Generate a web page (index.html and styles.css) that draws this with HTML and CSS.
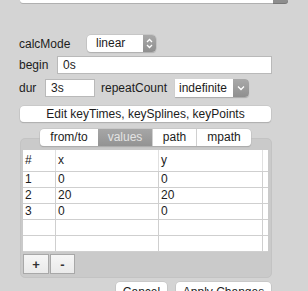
FILE: index.html
```html
<!DOCTYPE html>
<html lang="en">
<head>
  <meta charset="UTF-8" />
  <title>Animate Motion</title>
  <link rel="stylesheet" href="styles.css">
</head>
<body>
  <div class="panel">
    <div class="top-stub">
      <div class="stub-field"></div>
      <div class="stub-arrow"></div>
    </div>

    <div class="row row-calc">
      <span class="label label-calc">calcMode</span>
      <div class="select select-calc">
        <span class="select-text">linear</span>
        <span class="stepper">
          <svg width="7" height="11" viewBox="0 0 7 11"><path d="M1 4 L3.5 1.5 L6 4 M1 7 L3.5 9.5 L6 7" fill="none" stroke="#fff" stroke-width="1.3"/></svg>
        </span>
      </div>
    </div>

    <div class="row row-begin">
      <span class="label label-begin">begin</span>
      <div class="input input-begin">0s</div>
    </div>

    <div class="row row-dur">
      <span class="label label-dur">dur</span>
      <div class="input input-dur">3s</div>
      <span class="label label-repeat">repeatCount</span>
      <div class="popup">
        <span class="popup-text">indefinite</span>
        <span class="popup-arrow">
          <svg width="8" height="6" viewBox="0 0 8 6"><path d="M1 1.5 L4 4.5 L7 1.5" fill="none" stroke="#fff" stroke-width="1.3"/></svg>
        </span>
      </div>
    </div>

    <button class="push edit-button">Edit keyTimes, keySplines, keyPoints</button>

    <div class="tabs">
      <span class="tab tab-fromto">from/to</span>
      <span class="tab tab-values active">values</span>
      <span class="tab tab-path">path</span>
      <span class="tab tab-mpath">mpath</span>
    </div>

    <div class="group">
      <table class="grid">
        <tr class="head">
          <th class="c-num">#</th>
          <th class="c-x">x</th>
          <th class="c-y">y</th>
          <th class="c-end"></th>
        </tr>
        <tr><td>1</td><td>0</td><td>0</td><td></td></tr>
        <tr><td>2</td><td>20</td><td>20</td><td></td></tr>
        <tr><td>3</td><td>0</td><td>0</td><td></td></tr>
        <tr><td></td><td></td><td></td><td></td></tr>
        <tr><td></td><td></td><td></td><td></td></tr>
      </table>
      <div class="grid-buttons">
        <button class="square plus">+</button>
        <button class="square minus">-</button>
      </div>
    </div>

    <div class="actions">
      <button class="push cancel">Cancel</button>
      <button class="push apply">Apply Changes</button>
    </div>
  </div>
</body>
</html>
```

FILE: styles.css
```css
body {
  margin: 0;
  background: #d4d4d4;
  font-family: 'Liberation Sans', Arial, sans-serif;
  font-size: 12px;
  color: #1c1c1c;
  overflow: hidden;
}

.panel {
  padding-left: 20px;
  height: 291px;
}

.top-stub {
  display: flex;
  width: 268px;
  height: 3px;
}

.stub-field {
  flex: 1;
  background: #fff;
  border-bottom-left-radius: 3px;
  box-shadow: 0 1px 0 #b0b0b0;
}

.stub-arrow {
  width: 15px;
  background: #8e8e8e;
  border-bottom-right-radius: 3px;
  box-shadow: 0 1px 0 #777;
}

.row {
  display: flex;
  align-items: center;
  height: 18px;
}

.row-calc {
  margin-top: 32px;
  height: 17px;
}

.row-begin {
  margin-top: 4px;
}

.row-dur {
  margin-top: 5px;
}

.label {
  margin-left: -1px;
}

.label-calc {
  width: 68px;
}

.label-begin {
  width: 38px;
}

.label-dur {
  width: 26px;
}

.label-repeat {
  margin-left: 6px;
  width: 74px;
}

.select {
  display: flex;
  height: 17px;
  width: 69px;
  box-sizing: border-box;
  border-radius: 4px;
  background: #fff;
  box-shadow: 0 0 0 0.5px #b8b8b8, 0 1px 1px rgba(0,0,0,0.2);
  overflow: hidden;
}

.select-text {
  flex: 1;
  padding-left: 9px;
  line-height: 17px;
}

.stepper {
  width: 13px;
  display: flex;
  align-items: center;
  justify-content: center;
  background: linear-gradient(#a9a9a9, #8f8f8f);
}

.input {
  height: 18px;
  box-sizing: border-box;
  background: #fff;
  border: 1px solid #b9b9b9;
  padding-left: 5px;
  line-height: 16px;
}

.input-begin {
  width: 215px;
}

.input-dur {
  width: 50px;
}

.popup {
  display: flex;
  width: 74px;
  height: 18px;
  background: #fff;
  border-radius: 0 4px 4px 0;
  box-shadow: 0 1px 1px rgba(0,0,0,0.2);
  overflow: hidden;
}

.popup-text {
  flex: 1;
  padding-left: 4px;
  line-height: 18px;
}

.popup-arrow {
  width: 16px;
  display: flex;
  align-items: center;
  justify-content: center;
  background: linear-gradient(#a9a9a9, #8f8f8f);
}

.push {
  font-family: inherit;
  font-size: 12px;
  color: #1c1c1c;
  background: #fff;
  border: none;
  border-radius: 4px;
  box-shadow: 0 0 0 0.5px #bdbdbd, 0 1px 1px rgba(0,0,0,0.25);
  padding: 0;
}

.edit-button {
  display: block;
  margin-top: 9px;
  width: 251px;
  height: 16px;
  line-height: 16px;
}

.tabs {
  position: relative;
  z-index: 1;
  display: flex;
  margin: 7px 0 -8px 20px;
  width: 211px;
  height: 17px;
  background: #fff;
  border-radius: 4px;
  box-shadow: 0 0 0 0.5px #bdbdbd, 0 1px 1px rgba(0,0,0,0.25);
  overflow: hidden;
}

.tab {
  text-align: center;
  line-height: 17px;
  border-left: 1px solid #d0d0d0;
}

.tab-fromto {
  width: 58px;
  border-left: none;
}

.tab-values {
  width: 54px;
}

.tab-path {
  width: 43px;
}

.tab-mpath {
  flex: 1;
}

.tab.active {
  background: linear-gradient(#a6a6a6, #939393);
  color: #e4e4e4;
  border-left: none;
}

.group {
  width: 252px;
  height: 140px;
  box-sizing: border-box;
  background: #cacaca;
  border: 1px solid #c3c3c3;
  border-radius: 5px;
  padding: 11px 0 0 2px;
}

.grid {
  border-collapse: collapse;
  width: 245px;
  background: #fff;
  table-layout: fixed;
}

.grid th,
.grid td {
  padding: 0 0 0 2px;
  text-align: left;
  font-weight: normal;
  height: 15px;
  line-height: 15px;
  border-bottom: 1px solid #cfcfcf;
  border-left: 1px solid #cfcfcf;
}

.grid th:first-child,
.grid td:first-child {
  border-left: none;
}

.grid .head th {
  height: 21px;
  line-height: 21px;
  border-left: 1px solid #e0e0e0;
}

.grid .head th:first-child {
  border-left: none;
}

.c-num {
  width: 30px;
}

.c-x {
  width: 100px;
}

.c-y {
  width: 101px;
}

.grid-buttons {
  display: flex;
  margin-top: 2px;
}

.square {
  width: 26px;
  height: 20px;
  padding: 0;
  font-family: inherit;
  font-size: 13px;
  font-weight: bold;
  color: #333;
  background: linear-gradient(#f6f6f6, #eaeaea);
  border: 1px solid #a8a8a8;
}

.minus {
  width: 25px;
  margin-left: 1px;
}

.actions {
  display: flex;
  margin-top: 4px;
  padding-left: 96px;
}

.cancel {
  width: 51px;
  height: 20px;
}

.apply {
  margin-left: 9px;
  width: 95px;
  height: 20px;
}
```
